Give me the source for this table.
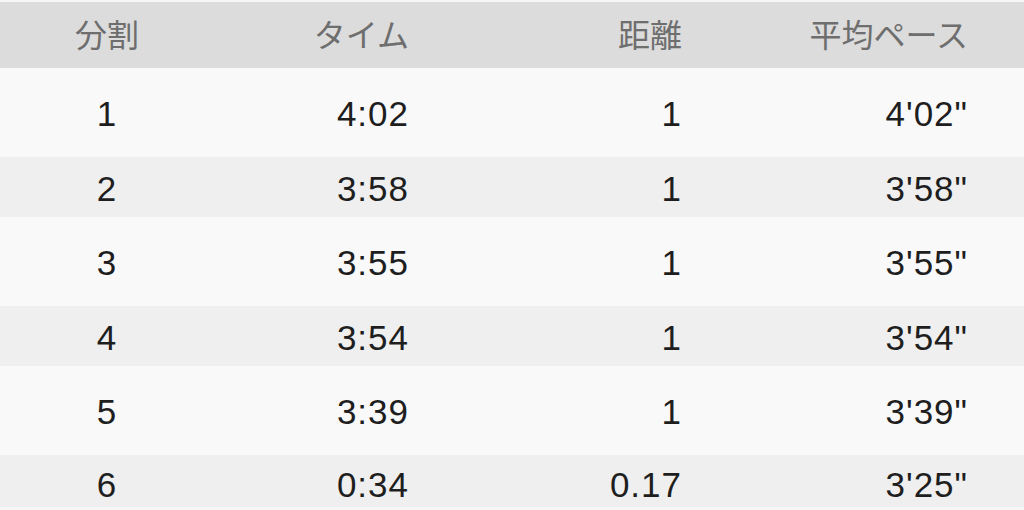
const rows = [
  { split: '1', time: '4:02', dist: '1', pace: "4'02\"", tall: true },
  { split: '2', time: '3:58', dist: '1', pace: "3'58\"", tall: false },
  { split: '3', time: '3:55', dist: '1', pace: "3'55\"", tall: true },
  { split: '4', time: '3:54', dist: '1', pace: "3'54\"", tall: false },
  { split: '5', time: '3:39', dist: '1', pace: "3'39\"", tall: true },
  { split: '6', time: '0:34', dist: '0.17', pace: "3'25\"", tall: false },
]

const cols = 'grid grid-cols-[214px_195px_273px_1fr] items-center pr-[56px]'

export default function App() {
  return (
    <div className="h-[510px] w-[1024px] overflow-hidden bg-[#f6f6f6] pt-[2px] font-['Liberation_Sans','Noto_Sans_CJK_JP',sans-serif]">
      <div
        className={`${cols} h-[66px] bg-[#dcdcdc] pb-[4px] text-[32px] text-[#6e6e6e] font-['Noto_Sans_CJK_JP',sans-serif]`}
      >
        <div className="text-center">分割</div>
        <div className="text-right">タイム</div>
        <div className="text-right">距離</div>
        <div className="text-right">平均ペース</div>
      </div>
      {rows.map((r, i) => (
        <div
          key={r.split}
          className={`${cols} pt-[4px] text-[35px] tracking-[1px] text-[#1e1e1e] ${
            i % 2 === 0 ? 'h-[89px] bg-[#f9f9f9]' : 'bg-[#efefef]'
          } ${i === 5 ? 'h-[52px]' : i % 2 === 1 ? 'h-[60px]' : ''}`}
        >
          <div className="text-center">{r.split}</div>
          <div className="text-right">{r.time}</div>
          <div className="text-right">{r.dist}</div>
          <div className="text-right">{r.pace}</div>
        </div>
      ))}
    </div>
  )
}
